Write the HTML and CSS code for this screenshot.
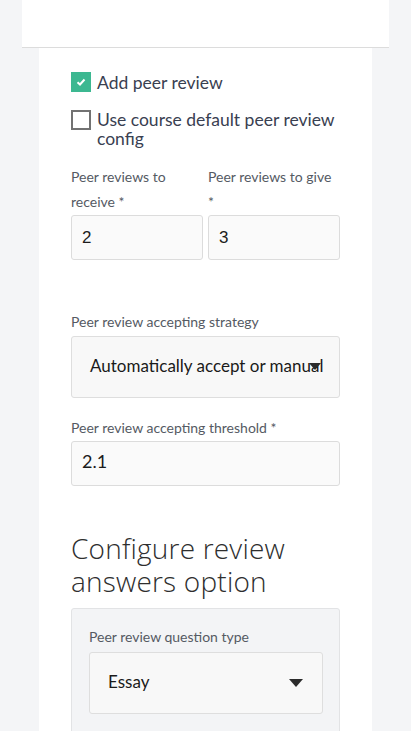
FILE: index.html
```html
<!DOCTYPE html>
<html>
<head>
<meta charset="utf-8">
<link rel="stylesheet" href="styles.css">
</head>
<body>
<div class="top-panel"></div>
<div class="card">
  <label class="check-row">
    <span class="box checked">
      <svg width="10" height="8" viewBox="0 0 10 8"><path d="M1.5 4.2 L4 6.5 L8.5 1.5" fill="none" stroke="#fff" stroke-width="2"/></svg>
    </span>
    <span class="check-text">Add peer review</span>
  </label>
  <label class="check-row second">
    <span class="box"></span>
    <span class="check-text">Use course default peer review config</span>
  </label>

  <div class="pair">
    <div class="field">
      <div class="label">Peer reviews to receive *</div>
      <div class="input sans">2</div>
    </div>
    <div class="field">
      <div class="label">Peer reviews to give *</div>
      <div class="input sans">3</div>
    </div>
  </div>

  <div class="label strategy">Peer review accepting strategy</div>
  <div class="select">
    <span class="select-text">Automatically accept or manual</span>
    <svg class="arrow" width="12" height="7" viewBox="0 0 12 7"><path d="M0 0 H12 L6 7 Z" fill="#2b2b2b"/></svg>
  </div>

  <div class="label threshold">Peer review accepting threshold *</div>
  <div class="input lato">2.1</div>

  <h2 class="heading">Configure review answers option</h2>

  <div class="gray-box">
    <div class="label">Peer review question type</div>
    <div class="select inner">
      <span class="select-text">Essay</span>
      <svg class="arrow" width="14" height="8" viewBox="0 0 14 8"><path d="M0 0 H14 L7 8 Z" fill="#2b2b2b"/></svg>
    </div>
  </div>
</div>
</body>
</html>
```

FILE: styles.css
```css
* { box-sizing: border-box; }
html, body {
  margin: 0;
  padding: 0;
  background: #f4f5f7;
  font-family: Lato, "Noto Sans", sans-serif;
  height: 731px;
  overflow: hidden;
}
.top-panel {
  margin: 0 22px;
  height: 48px;
  background: #fff;
  border-bottom: 1px solid #dcdcdc;
}
.card {
  margin: 0 39px;
  background: #fff;
  padding: 24px 32px 40px;
  min-height: 700px;
}
.check-row {
  display: flex;
  align-items: flex-start;
  gap: 6px;
  color: #394051;
  font-size: 17.5px;
  line-height: 20px;
}
.check-row.second {
  margin-top: 17px;
  line-height: 19px;
}
.box {
  flex: none;
  width: 20px;
  height: 20px;
  border: 2px solid #727272;
  background: #fff;
  display: flex;
  align-items: center;
  justify-content: center;
}
.box.checked {
  background: #3cb891;
  border-color: #3cb891;
}
.check-text { padding-top: 1px; }
.second .check-text { padding-top: 0; }
.pair {
  display: flex;
  gap: 5px;
  margin-top: 16px;
}
.field { width: 132px; }
.label {
  font-size: 14px;
  line-height: 25px;
  color: #555a63;
}
.input {
  height: 45px;
  background: #fafafa;
  border: 1px solid #dcdcdc;
  border-radius: 3px;
  padding: 0 10px;
  display: flex;
  align-items: center;
  font-size: 18px;
  color: #1c1c1c;
  margin-top: 1px;
}
.input.lato { padding-bottom: 6px; }
.input.sans {
  font-family: "Liberation Sans", Arial, sans-serif;
  font-size: 17px;
}
.label.strategy { margin-top: 49px; }
.label.threshold { margin-top: 17px; }
.select {
  position: relative;
  height: 62px;
  background: #f8f8f8;
  border: 1px solid #dedede;
  border-radius: 3px;
  padding: 0 18px 4px;
  display: flex;
  align-items: center;
  font-size: 17px;
  color: #1a1a1a;
  margin-top: 2px;
}
.select-text {
  white-space: nowrap;
}
.select .arrow {
  position: absolute;
  right: 18px;
  top: 26px;
}
.heading {
  margin: 46px 0 0;
  font-family: "Open Sans", Lato, sans-serif;
  font-weight: 300;
  font-size: 28px;
  line-height: 33px;
  color: #2e2e2e;
  letter-spacing: 0.2px;
}
.gray-box {
  margin-top: 10px;
  background: #f3f4f6;
  border: 1px solid #e2e3e5;
  border-radius: 3px;
  padding: 15px 16px 40px 17px;
}
.select.inner {
  margin-top: 3px;
  background: #f8f8f8;
  padding-bottom: 3px;
}
.select.inner .arrow {
  right: 19px;
  top: 26px;
}
```
